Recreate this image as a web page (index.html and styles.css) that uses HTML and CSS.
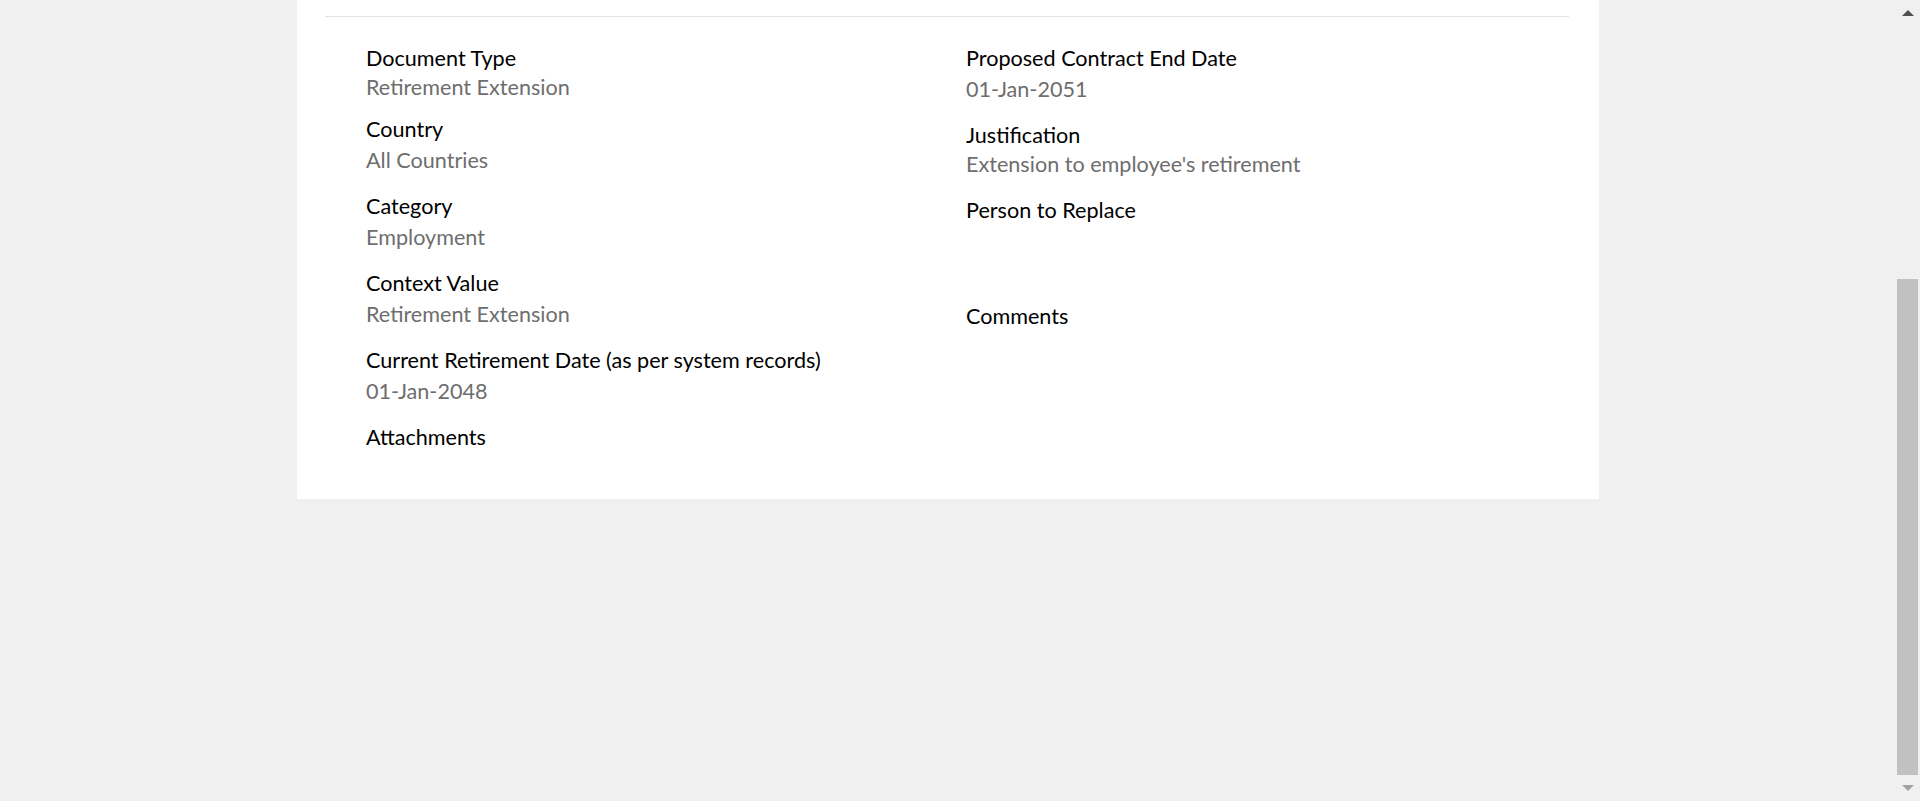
FILE: index.html
```html
<!DOCTYPE html>
<html lang="en">
<head>
<meta charset="utf-8">
<title>Retirement Extension</title>
<link rel="stylesheet" href="styles.css">
</head>
<body>
<main class="page">
  <section class="card">
    <hr class="divider">
    <div class="details">
      <div class="col col-left">
        <div class="field field-first">
          <div class="label">Document Type</div>
          <div class="value">Retirement Extension</div>
        </div>
        <div class="field">
          <div class="label">Country</div>
          <div class="value">All Countries</div>
        </div>
        <div class="field">
          <div class="label">Category</div>
          <div class="value">Employment</div>
        </div>
        <div class="field">
          <div class="label">Context Value</div>
          <div class="value">Retirement Extension</div>
        </div>
        <div class="field">
          <div class="label">Current Retirement Date (as per system records)</div>
          <div class="value">01-Jan-2048</div>
        </div>
        <div class="field">
          <div class="label">Attachments</div>
        </div>
      </div>
      <div class="col col-right">
        <div class="field">
          <div class="label">Proposed Contract End Date</div>
          <div class="value">01-Jan-2051</div>
        </div>
        <div class="field">
          <div class="label">Justification</div>
          <div class="value value-tight">Extension to employee's retirement</div>
        </div>
        <div class="field">
          <div class="label">Person to Replace</div>
          <div class="value value-empty"></div>
        </div>
        <div class="field">
          <div class="label">Comments</div>
        </div>
      </div>
    </div>
  </section>
</main>
<div class="scrollbar" aria-hidden="true">
  <div class="arrow arrow-up"></div>
  <div class="track"><div class="thumb"></div></div>
  <div class="arrow arrow-down"></div>
</div>
</body>
</html>
```

FILE: styles.css
```css
html, body {
  margin: 0;
  padding: 0;
  height: 100%;
  overflow: hidden;
}
body {
  background: #f0f0f0;
  font-family: "Lato", "Open Sans", "Liberation Sans", sans-serif;
  font-size: 21.6px;
}
.page {
  padding-left: 297px;
}
.card {
  width: 1302px;
  height: 499px;
  background: #ffffff;
  box-sizing: border-box;
  padding-top: 16px;
}
.divider {
  margin: 0 30px 0 28px;
  border: 0;
  border-top: 1px solid #dfe3e8;
  height: 0;
}
.details {
  display: grid;
  grid-template-columns: 600px 1fr;
  padding-left: 69px;
  padding-top: 27px;
}
.field {
  margin-bottom: 18px;
}
.field-first {
  margin-bottom: 14px;
}
.label {
  color: #000000;
  line-height: 28px;
}
.value {
  color: #6e6e6e;
  line-height: 28px;
  margin-top: 3px;
}
.field-first .value {
  margin-top: 1px;
}
.value-tight {
  margin-top: 1px;
  margin-bottom: 2px;
}
.value-empty {
  height: 57px;
}
.scrollbar {
  position: fixed;
  top: 0;
  right: 0;
  width: 24px;
  height: 100%;
  display: flex;
  flex-direction: column;
  background: #f0f0f0;
}
.arrow {
  height: 26px;
  display: flex;
  align-items: center;
  justify-content: center;
}
.arrow::before {
  content: "";
  width: 0;
  height: 0;
  border-left: 6px solid transparent;
  border-right: 6px solid transparent;
}
.arrow-up::before {
  border-bottom: 6px solid #505050;
}
.arrow-down::before {
  border-top: 6px solid #a3a3a3;
}
.track {
  flex: 1;
  display: flex;
  flex-direction: column;
  justify-content: flex-end;
  padding: 0 2px 0 1px;
}
.thumb {
  height: 496px;
  background: #c1c1c1;
}
```
